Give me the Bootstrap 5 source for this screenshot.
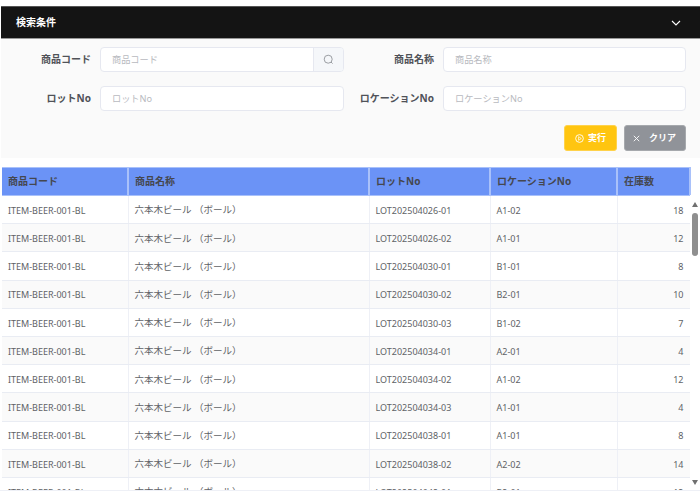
<!DOCTYPE html>
<html lang="ja"><head><meta charset="utf-8">
<link href="https://cdn.jsdelivr.net/npm/bootstrap@5.3.0/dist/css/bootstrap.min.css" rel="stylesheet">
<style>
html,body{height:494px;overflow:hidden;background:#fff;}
body{font-family:"Noto Sans","Noto Sans CJK JP",sans-serif;font-size:9px;color:#606266;padding-top:6px;}
.bar-top{height:33px;background:#141414;border-top:1px solid #555;border-bottom:1px solid #999;margin-left:1px;color:#fff;font-size:10px;font-weight:700;padding:0 15px;}
.panel-form{background:#fafafa;height:119px;margin-left:1px;padding:8px 14px 0 0;}
.form-line{height:25px;margin-bottom:14px;}
.lbl{font-size:10px;font-weight:700;color:#505258;text-align:right;white-space:nowrap;}
.lbl-a{width:90px;margin-right:9px;}
.lbl-b{width:84px;margin-right:9px;}
.fld{height:25px;width:244px;flex:none;border:1px solid #e6e8f0;border-radius:4px;background:#fff;font-size:9.2px;padding:0 11px;color:#606266;outline:none;font-family:inherit;}
.fld-r{width:243px;}
.fld::placeholder{color:#b8bac0;}
.fld-join{display:flex;width:244px;flex:none;height:25px;border:1px solid #e6e8f0;border-radius:4px;background:#fff;}
.fld-join input{border:0;flex:1;min-width:0;background:transparent;font-size:9.2px;padding:0 11px;outline:none;font-family:inherit;}
.fld-join input::placeholder{color:#b8bac0;}
.addon{width:30px;background:#f5f7fa;border-left:1px solid #e6e8f0;border-radius:0 3px 3px 0;}
.btn-run,.btn-clr{height:26px;border-radius:3px;font-size:9px;font-weight:700;color:#fff;padding:0;border:1px solid;}
.btn-run{width:53px;background:#ffc510;border-color:#ffd24a;margin-right:7px;}
.btn-clr{width:62px;background:#909399;border-color:#a6a9ad;padding-right:2px;}
.grid-wrap{margin-top:9px;height:324px;overflow:hidden;position:relative;padding-left:2px;border-bottom:1px solid #eef0f6;}
.tbl{table-layout:fixed;width:688px;border-collapse:collapse;margin:0;}
.tbl th{height:28px;background:#6b93f6;color:#45474f;font-size:10px;font-weight:700;padding:0 6px;border:1px solid #a9c1fa;border-width:1px 2px 1px 0;white-space:nowrap;vertical-align:middle;}
.tbl td{height:28.2px;padding:2px 6px 0;border-right:1px solid #eef0f6;border-bottom:1px solid #e9ecf3;font-size:9px;color:#606266;white-space:nowrap;background:#fff;}
.tbl tr:nth-child(even) td{background:#fafafa;}
.tbl td.nm{padding-left:6px;font-size:9.5px;}
.sbar{position:absolute;right:0;top:28px;width:10px;height:295px;background:#fff;}
.sthumb{position:absolute;left:2px;top:18px;width:6px;height:43px;background:#8f8f8f;border-radius:3px;}
.arr-u,.arr-d{position:absolute;left:1.5px;width:0;height:0;border-left:3.5px solid transparent;border-right:3.5px solid transparent;}
.arr-u{top:7px;border-bottom:5px solid #707070;}
.arr-d{bottom:5px;border-top:5px solid #707070;}
</style></head><body>
<div class="bar-top d-flex align-items-center justify-content-between">
<span>検索条件</span>
<svg width="10" height="6" viewBox="0 0 10 6" class="me-1"><path d="M1 1l4 4 4-4" fill="none" stroke="#fff" stroke-width="1.1"/></svg>
</div>
<div class="panel-form">
<div class="d-flex align-items-center form-line">
<div class="lbl lbl-a">商品コード</div>
<div class="fld-join"><input placeholder="商品コード"><div class="addon d-flex align-items-center justify-content-center"><svg width="11" height="11" viewBox="0 0 11 11"><circle cx="5.2" cy="5.2" r="4" fill="none" stroke="#909399" stroke-width=".9"/><path d="M8 8l1.6 1.6" stroke="#909399" stroke-width=".9"/></svg></div></div>
<div class="lbl lbl-b ms-auto">商品名称</div>
<input class="fld fld-r" placeholder="商品名称">
</div>
<div class="d-flex align-items-center form-line">
<div class="lbl lbl-a">ロットNo</div>
<input class="fld" placeholder="ロットNo">
<div class="lbl lbl-b ms-auto">ロケーションNo</div>
<input class="fld fld-r" placeholder="ロケーションNo">
</div>
<div class="d-flex justify-content-end">
<button class="btn btn-run d-flex align-items-center justify-content-center gap-1"><svg width="9" height="9" viewBox="0 0 10 10"><circle cx="5" cy="5" r="4.3" fill="none" stroke="#fff"/><path d="M4 3l3 2-3 2z" fill="none" stroke="#fff" stroke-width=".8"/></svg>実行</button>
<button class="btn btn-clr d-flex align-items-center justify-content-center gap-1"><svg width="9" height="9" viewBox="0 0 10 10" class="me-1"><path d="M2 2l6 6M8 2l-6 6" stroke="#fff"/></svg>クリア</button>
</div>
</div>
<div class="grid-wrap">
<table class="table tbl align-middle">
<colgroup><col style="width:126px"><col style="width:241px"><col style="width:121px"><col style="width:127px"><col style="width:73px"></colgroup>
<thead><tr><th>商品コード</th><th>商品名称</th><th>ロットNo</th><th>ロケーションNo</th><th>在庫数</th></tr></thead>
<tbody id="rows">
<tr><td>ITEM-BEER-001-BL</td><td class="nm">六本木ビール （ボール）</td><td>LOT202504026-01</td><td>A1-02</td><td class="text-end">18</td></tr>
<tr><td>ITEM-BEER-001-BL</td><td class="nm">六本木ビール （ボール）</td><td>LOT202504026-02</td><td>A1-01</td><td class="text-end">12</td></tr>
<tr><td>ITEM-BEER-001-BL</td><td class="nm">六本木ビール （ボール）</td><td>LOT202504030-01</td><td>B1-01</td><td class="text-end">8</td></tr>
<tr><td>ITEM-BEER-001-BL</td><td class="nm">六本木ビール （ボール）</td><td>LOT202504030-02</td><td>B2-01</td><td class="text-end">10</td></tr>
<tr><td>ITEM-BEER-001-BL</td><td class="nm">六本木ビール （ボール）</td><td>LOT202504030-03</td><td>B1-02</td><td class="text-end">7</td></tr>
<tr><td>ITEM-BEER-001-BL</td><td class="nm">六本木ビール （ボール）</td><td>LOT202504034-01</td><td>A2-01</td><td class="text-end">4</td></tr>
<tr><td>ITEM-BEER-001-BL</td><td class="nm">六本木ビール （ボール）</td><td>LOT202504034-02</td><td>A1-02</td><td class="text-end">12</td></tr>
<tr><td>ITEM-BEER-001-BL</td><td class="nm">六本木ビール （ボール）</td><td>LOT202504034-03</td><td>A1-01</td><td class="text-end">4</td></tr>
<tr><td>ITEM-BEER-001-BL</td><td class="nm">六本木ビール （ボール）</td><td>LOT202504038-01</td><td>A1-01</td><td class="text-end">8</td></tr>
<tr><td>ITEM-BEER-001-BL</td><td class="nm">六本木ビール （ボール）</td><td>LOT202504038-02</td><td>A2-02</td><td class="text-end">14</td></tr>
<tr><td>ITEM-BEER-001-BL</td><td class="nm">六本木ビール （ボール）</td><td>LOT202504042-01</td><td>B2-01</td><td class="text-end">12</td></tr>
</tbody></table>
<div class="sbar"><div class="arr-u"></div><div class="sthumb"></div><div class="arr-d"></div></div>
</div>
</body></html>
